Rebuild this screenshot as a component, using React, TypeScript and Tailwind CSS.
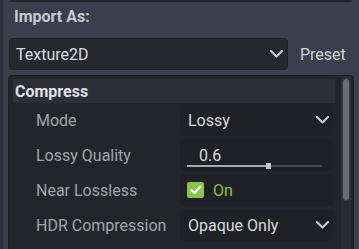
function Chevron() {
  return (
    <svg width="13" height="8" viewBox="0 0 13 8" fill="none" className="shrink-0">
      <polyline points="1,1 6.5,6.5 12,1" stroke="#c9cacf" strokeWidth="2.2" strokeLinecap="round" strokeLinejoin="round" />
    </svg>
  );
}

function Row({ label, children }: { label: string; children: React.ReactNode }) {
  return (
    <div className="flex items-center h-[32px]">
      <div className="w-[167px] pl-[23px] text-[16px] leading-[19px] text-[#a3a5ab]">{label}</div>
      <div className="w-[153px] h-full rounded-[4px] bg-[#1f2127] flex items-center">{children}</div>
    </div>
  );
}

function Select({ value }: { value: string }) {
  return (
    <div className="flex items-center justify-between w-full pl-[8px] pr-[4px]">
      <span className="text-[16px] leading-[19px] text-[#dadbdd]">{value}</span>
      <Chevron />
    </div>
  );
}

export default function App() {
  const quality = 0.6;
  return (
    <div
      className="w-[359px] h-[249px] overflow-hidden bg-[#3b3e4c] flex"
      style={{ fontFamily: "Roboto, 'Liberation Sans', sans-serif" }}
    >
      <div className="w-[3px] bg-[#2e303c] shrink-0" />
      <div className="flex-1 flex flex-col pl-[5px]">
        <div className="ml-[2px] w-[342px] h-[2px] bg-[#23252c] rounded-b-[2px]" />
        <div className="mt-[5px] ml-[6px] text-[16px] leading-[19px] font-bold text-[#c9cbd2]">Import As:</div>
        <div className="mt-[12px] flex items-center">
          <div className="ml-[1px] w-[279px] h-[32px] rounded-[4px] bg-[#262830] border border-[#1f2127] flex items-center justify-between pl-[6px] pr-[4px]">
            <span className="text-[16px] leading-[19px] text-[#dcdde0]">Texture2D</span>
            <Chevron />
          </div>
          <span className="ml-[12px] text-[16px] leading-[19px] text-[#d2d3d6]">Preset</span>
        </div>
        <div className="mt-[5px] w-[346px] flex-1 rounded-t-[4px] bg-[#23252c] border-l border-r border-t border-[#1e2026] flex">
          <div className="flex-1 pl-[4px] pt-[3px] flex flex-col">
            <div className="w-[322px] h-[24px] bg-[#2c2e38] flex items-center pl-[2px]">
              <span className="text-[16px] leading-[19px] font-bold text-[#e1e2e5]">Compress</span>
            </div>
            <div className="mt-[1px] flex flex-col gap-[3px]">
              <Row label="Mode">
                <Select value="Lossy" />
              </Row>
              <Row label="Lossy Quality">
                <div className="relative w-full h-full">
                  <span className="absolute left-[19px] top-[7px] text-[16px] leading-[19px] text-[#dadbdd]">0.6</span>
                  <div className="absolute left-[7px] right-[11px] top-[26px] h-[2px] bg-[#4b4d56]">
                    <div className="h-full bg-[#a9aaaf]" style={{ width: `${quality * 100}%` }} />
                    <div className="absolute top-[-2px] w-[5px] h-[6px] bg-[#c4c5c9]" style={{ left: `calc(${quality * 100}% - 2px)` }} />
                  </div>
                </div>
              </Row>
              <Row label="Near Lossless">
                <div className="flex items-center pl-[7px]">
                  <div className="w-[17px] h-[16px] rounded-[2px] bg-[#8bc34a] flex items-center justify-center">
                    <svg width="12" height="10" viewBox="0 0 12 10" fill="none">
                      <polyline points="1.5,5 4.5,8 10.5,1.5" stroke="#ffffff" strokeWidth="2.2" strokeLinecap="round" strokeLinejoin="round" />
                    </svg>
                  </div>
                  <span className="ml-[9px] text-[16px] leading-[19px] text-[#8bc34a]">On</span>
                </div>
              </Row>
              <Row label="HDR Compression">
                <Select value="Opaque Only" />
              </Row>
            </div>
          </div>
          <div className="w-[10px] mr-[2px] pt-[2px] bg-[#2a2c34] flex flex-col items-center">
            <div className="w-[8px] h-[123px] rounded-[4px] bg-[#6a6c73] border border-[#3a3c44]" />
          </div>
        </div>
      </div>
    </div>
  );
}
